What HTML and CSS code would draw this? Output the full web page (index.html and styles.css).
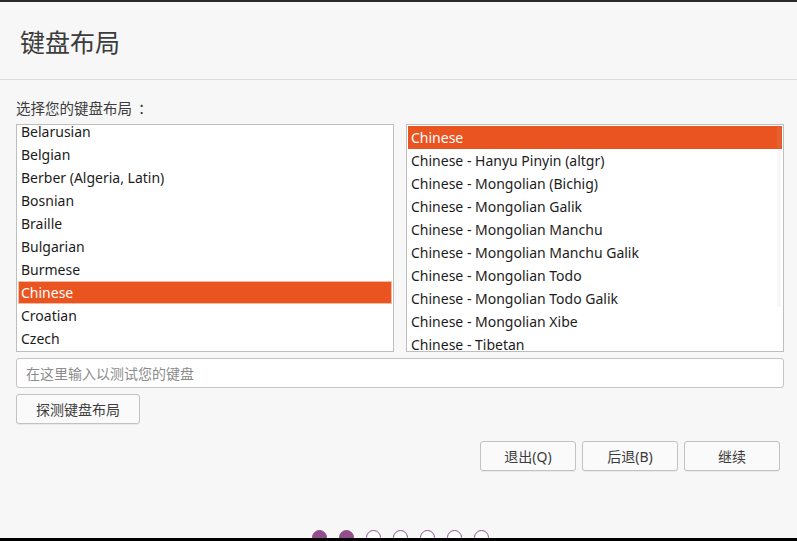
FILE: index.html
```html
<!DOCTYPE html>
<html lang="zh">
<head>
<meta charset="utf-8">
<link rel="stylesheet" href="styles.css">
</head>
<body>
<div class="topbar"></div>
<header class="header"><h1 class="title">键盘布局</h1></header>
<main class="content">
  <div class="label">选择您的键盘布局<span class="colon">：</span></div>
  <div class="lists">
    <div class="list">
      <div class="scroll left-scroll">
        <div class="item">Belarusian</div>
        <div class="item">Belgian</div>
        <div class="item">Berber (Algeria, Latin)</div>
        <div class="item">Bosnian</div>
        <div class="item">Braille</div>
        <div class="item">Bulgarian</div>
        <div class="item">Burmese</div>
        <div class="item selected focused">Chinese</div>
        <div class="item">Croatian</div>
        <div class="item">Czech</div>
      </div>
    </div>
    <div class="list">
      <div class="scroll">
        <div class="item selected">Chinese</div>
        <div class="item">Chinese - Hanyu Pinyin (altgr)</div>
        <div class="item">Chinese - Mongolian (Bichig)</div>
        <div class="item">Chinese - Mongolian Galik</div>
        <div class="item">Chinese - Mongolian Manchu</div>
        <div class="item">Chinese - Mongolian Manchu Galik</div>
        <div class="item">Chinese - Mongolian Todo</div>
        <div class="item">Chinese - Mongolian Todo Galik</div>
        <div class="item">Chinese - Mongolian Xibe</div>
        <div class="item">Chinese - Tibetan</div>
      </div>
      <div class="scrollbar"></div>
    </div>
  </div>
  <input class="test-input" type="text" placeholder="在这里输入以测试您的键盘">
  <div class="row-detect"><button class="btn detect">探测键盘布局</button></div>
  <div class="actions">
    <button class="btn action">退出(Q)</button>
    <button class="btn action">后退(B)</button>
    <button class="btn action">继续</button>
  </div>
</main>
<footer class="dots">
  <span class="dot filled"></span>
  <span class="dot filled"></span>
  <span class="dot"></span>
  <span class="dot"></span>
  <span class="dot"></span>
  <span class="dot"></span>
  <span class="dot"></span>
</footer>
<div class="bottombar"></div>
</body>
</html>
```
FILE: styles.css
```css
* { box-sizing: border-box; }
html, body { margin: 0; padding: 0; }
body {
  width: 797px;
  height: 541px;
  overflow: hidden;
  background: #f7f7f7;
  color: #3c3c3c;
  font-family: "Noto Sans", "Noto Sans CJK SC", sans-serif;
  font-size: 14px;
  position: relative;
}
.topbar { height: 2px; background: #2b2b2b; }
.header {
  height: 78px;
  border-bottom: 1px solid #dcdcdc;
  padding: 0 0 0 20px;
  display: flex;
  align-items: center;
}
.title {
  margin: 0;
  font-weight: normal;
  font-size: 25px;
  color: #3c3c3c;
  font-family: "Noto Sans CJK SC", sans-serif;
}
.content { padding: 0 13px 0 16px; }
.label {
  font-family: "Noto Sans CJK SC", sans-serif;
  font-size: 14.5px;
  height: 20px;
  line-height: 20px;
  margin-top: 18px;
  margin-bottom: 6px;
}
.colon {
  display: inline-block;
  padding-left: 6px;
}
.lists {
  display: flex;
  gap: 12px;
}
.list {
  width: 378px;
  height: 228px;
  border: 1px solid #bebebe;
  background: #fff;
  overflow: hidden;
  position: relative;
}
.scroll { padding: 1px 1px; }
.left-scroll { margin-top: -6px; }
.item {
  height: 23px;
  line-height: 23px;
  padding-left: 3px;
  white-space: nowrap;
  color: #1c1c1c;
}
.selected { background: #e95420; color: #fff; }
.focused { box-shadow: inset 0 0 0 1px #f3b9a3; }
.scrollbar {
  position: absolute;
  right: 2px;
  top: 2px;
  width: 4px;
  height: 180px;
  background: rgba(200,200,200,0.12);
}
.test-input {
  display: block;
  width: 768px;
  height: 30px;
  margin-top: 6px;
  border: 1px solid #c4c4c4;
  border-radius: 3px;
  background: #fff;
  padding: 0 0 0 9px;
  font-family: "Noto Sans CJK SC", sans-serif;
  font-size: 14px;
  color: #3c3c3c;
  outline: none;
}
.test-input::placeholder { color: #8c8c8c; }
.row-detect { margin-top: 6px; }
.btn {
  height: 30px;
  border: 1px solid #c2c2c2;
  border-radius: 3px;
  background: #fafafa;
  color: #3c3c3c;
  font-family: "Noto Sans", "Noto Sans CJK SC", sans-serif;
  font-size: 14px;
  padding: 0;
  box-shadow: 0 1px 0 rgba(0,0,0,0.05);
}
.detect { width: 124px; }
.actions {
  display: flex;
  justify-content: flex-end;
  gap: 6px;
  margin-top: 17px;
  padding-right: 4px;
}
.action { width: 96px; }
.dots {
  position: absolute;
  left: 312px;
  top: 530px;
  display: flex;
  gap: 12px;
}
.dot {
  width: 15px;
  height: 15px;
  border-radius: 50%;
  border: 1.5px solid #94508d;
  background: #fff;
}
.dot.filled { background: #924d8a; border-color: #924d8a; }
.bottombar {
  position: absolute;
  left: 0;
  right: 0;
  bottom: 0;
  height: 3px;
  background: #000;
}
```
